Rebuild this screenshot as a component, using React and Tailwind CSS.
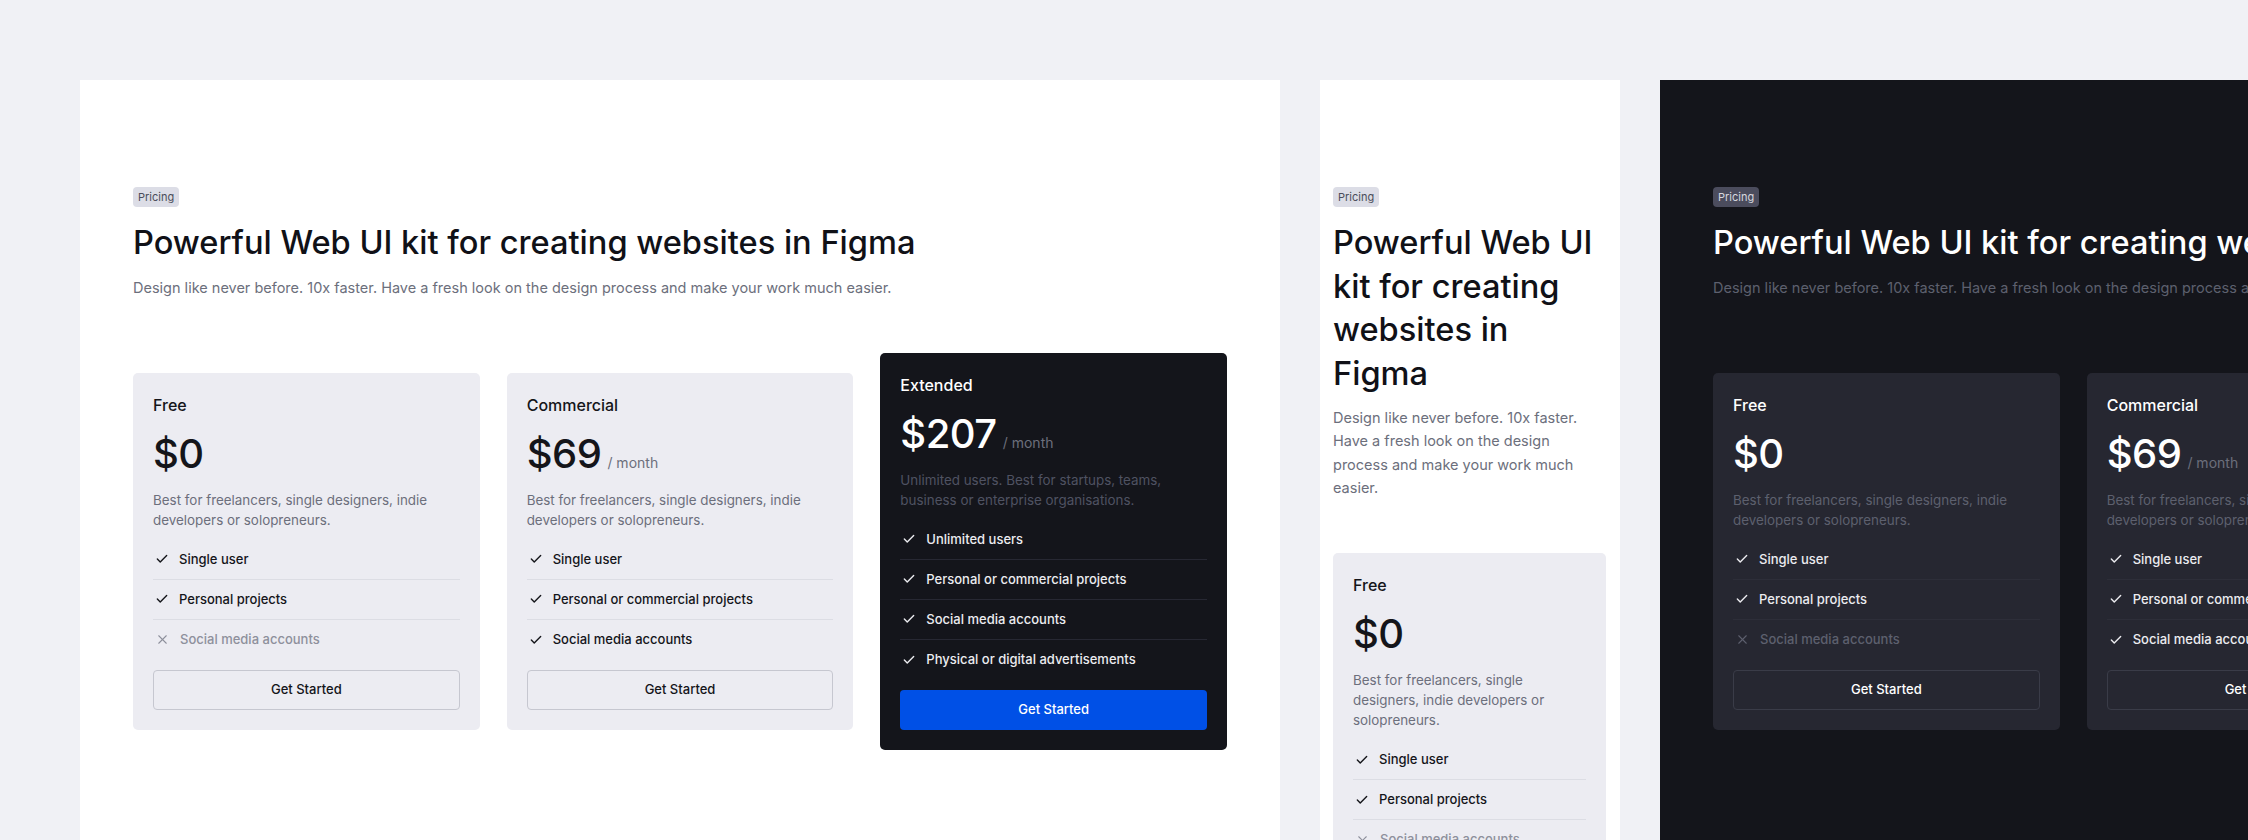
import React from 'react';
import { Check, X } from 'lucide-react';

const plans = [
  {
    name: 'Free',
    price: '$0',
    period: null,
    desc: 'Best for freelancers, single designers, indie developers or solopreneurs.',
    features: [
      { label: 'Single user', ok: true },
      { label: 'Personal projects', ok: true },
      { label: 'Social media accounts', ok: false },
    ],
  },
  {
    name: 'Commercial',
    price: '$69',
    period: '/ month',
    desc: 'Best for freelancers, single designers, indie developers or solopreneurs.',
    features: [
      { label: 'Single user', ok: true },
      { label: 'Personal or commercial projects', ok: true },
      { label: 'Social media accounts', ok: true },
    ],
  },
  {
    name: 'Extended',
    price: '$207',
    period: '/ month',
    desc: 'Unlimited users. Best for startups, teams, business or enterprise organisations.',
    featured: true,
    features: [
      { label: 'Unlimited users', ok: true },
      { label: 'Personal or commercial projects', ok: true },
      { label: 'Social media accounts', ok: true },
      { label: 'Physical or digital advertisements', ok: true },
    ],
  },
];

const PlanCard = ({ plan, dark }) => {
  const featured = plan.featured;
  // featured card is always the near-black one with the blue button
  const cardBg = featured ? 'bg-[#14151b]' : dark ? 'bg-[#262731]' : 'bg-[#ececf2]';
  const strong = featured || dark ? 'text-white' : 'text-[#14151a]';
  const muted = featured ? 'text-[#4f5262]' : dark ? 'text-[#5d606e]' : 'text-[#6c6f7c]';
  const divider = featured ? 'border-[#272833]' : dark ? 'border-[#2d2e39]' : 'border-[#dcdde4]';
  const off = dark ? 'text-[#5d606e]' : 'text-[#8e909c]';

  return (
    <div className={`${cardBg} rounded-[5px] px-5 pt-5 pb-5 flex flex-col`}>
      <div className={`text-[16px] leading-6 font-medium ${strong}`}>{plan.name}</div>
      <div className="mt-[13px] flex items-baseline gap-1.5 h-12">
        <span className={`text-[40px] leading-[48px] font-medium tracking-[-0.5px] ${strong}`}>{plan.price}</span>
        {plan.period && <span className="text-[14px] text-[#6c6f7c]">{plan.period}</span>}
      </div>
      <p className={`mt-3 text-[13.4px] leading-5 ${muted}`}>{plan.desc}</p>
      <ul className="mt-[10px]">
        {plan.features.map((f, i) => (
          <li
            key={f.label}
            className={`h-10 flex items-center gap-[10px] pl-[2px] text-[13px] font-medium ${
              i < plan.features.length - 1 ? `border-b ${divider}` : ''
            } ${f.ok ? (featured || dark ? 'text-[#ececf0]' : 'text-[#14151a]') : off}`}
          >
            {f.ok ? (
              <Check size={14} strokeWidth={2.4} className="shrink-0" />
            ) : (
              <X size={15} strokeWidth={1.7} className="shrink-0" />
            )}
            <span>{f.label}</span>
          </li>
        ))}
      </ul>
      <button
        className={`mt-[10px] h-10 rounded-[4px] text-[13px] font-medium ${
          featured
            ? 'bg-[#0050e6] text-white'
            : dark
            ? 'border border-[#3a3c48] text-white'
            : 'border border-[#c6c7d0] text-[#14151a]'
        }`}
      >
        Get Started
      </button>
    </div>
  );
};

const Pricing = ({ dark = false, narrow = false }) => {
  const panel = dark ? 'bg-[#14151b]' : 'bg-white';
  const badge = dark ? 'bg-[#4b4c5d] text-[#d6d7df]' : 'bg-[#dcdde6] text-[#4b4d5a]';
  const heading = dark ? 'text-white' : 'text-[#101117]';
  const sub = dark ? 'text-[#5d606e]' : 'text-[#6c6f7c]';

  return (
    <section
      className={`${panel} shrink-0 pt-[107px] pb-[120px] ${
        narrow ? 'w-[300px] pl-[13px] pr-[14px]' : 'w-[1200px] px-[53px]'
      }`}
    >
      <div className={`flex w-fit items-center h-5 px-[5px] rounded-[4px] text-[11px] ${badge}`}>Pricing</div>
      <h2 className={`mt-[14px] text-[32.6px] leading-[43.5px] font-medium ${heading}`}>
        Powerful Web UI kit for creating websites in Figma
      </h2>
      <p className={`mt-[11px] text-[14.5px] leading-[23.3px] ${sub}`}>
        Design like never before. 10x faster. Have a fresh look on the design process and make your work much easier.
      </p>
      <div className={`mt-[54px] grid items-center ${narrow ? 'grid-cols-1 gap-6' : 'grid-cols-3 gap-[27px]'}`}>
        {(narrow ? plans.slice(0, 1) : plans).map((p) => (
          <PlanCard key={p.name} plan={p} dark={dark} />
        ))}
      </div>
    </section>
  );
};

export default function App() {
  return (
    <div
      className="h-[840px] w-full overflow-hidden bg-[#f0f1f5] pt-20 pl-20 flex gap-10 items-start"
      style={{ fontFamily: 'Inter, "Noto Sans", sans-serif' }}
    >
      <Pricing />
      <Pricing narrow />
      <Pricing dark />
    </div>
  );
}
